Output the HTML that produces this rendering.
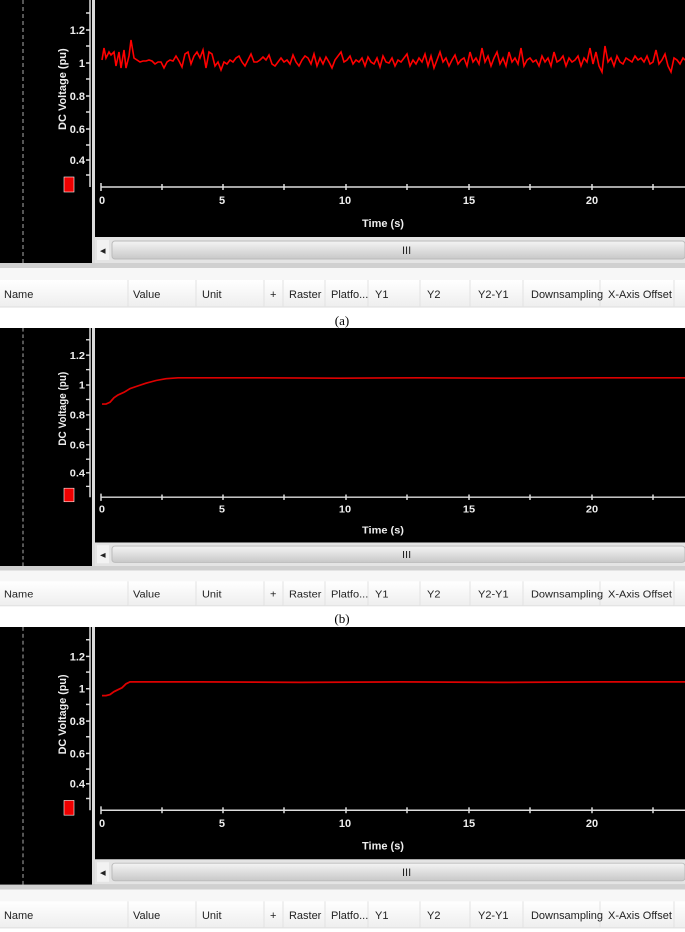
<!DOCTYPE html>
<html><head><meta charset="utf-8"><style>
html,body{margin:0;padding:0;background:#fff;width:685px;height:932px;overflow:hidden}
svg{display:block}
.t{font-family:"Liberation Sans Narrow","Liberation Sans",sans-serif;font-size:11px;fill:#222}
.w{font-family:"Liberation Sans",sans-serif;font-size:11px;font-weight:bold;fill:#eee}
.cap{font-family:"Liberation Serif",serif;font-size:13px;fill:#000}
</style></head><body>
<svg width="685" height="932" viewBox="0 0 685 932" xmlns="http://www.w3.org/2000/svg">
<defs>
<linearGradient id="tr" x1="0" y1="0" x2="0" y2="1"><stop offset="0" stop-color="#f4f4f4"/><stop offset="1" stop-color="#c8c8c8"/></linearGradient>
<linearGradient id="hd" x1="0" y1="0" x2="0" y2="1"><stop offset="0" stop-color="#ffffff"/><stop offset="1" stop-color="#eeeeee"/></linearGradient>
<g id="panel">
<rect x="0" y="0" width="685" height="263" fill="#000"/>
<line x1="23" y1="0" x2="23" y2="263" stroke="#aaa" stroke-width="1" stroke-dasharray="4,3"/>
<rect x="92" y="0" width="3" height="263" fill="#ddd"/>
<rect x="95" y="237" width="590" height="26" fill="#e4e4e4"/>
<rect x="97" y="240" width="12" height="20" fill="#f2f2f2"/>
<text x="100" y="254" class="t" font-size="9">◂</text>
<rect x="112" y="241" width="573" height="18" rx="3" fill="url(#tr)" stroke="#bbb"/>
<text x="402" y="254" class="t" font-size="8" fill="#666">III</text>
<rect x="0" y="263" width="685" height="5" fill="#d0d0d0"/>
<rect x="0" y="268" width="685" height="12" fill="#f7f7f7"/>
<rect x="0" y="280" width="685" height="27" fill="url(#hd)"/>
<line x1="0" y1="307" x2="685" y2="307" stroke="#ddd"/>
<g stroke="#e2e2e2">
<line x1="128" y1="280" x2="128" y2="307"/><line x1="196" y1="280" x2="196" y2="307"/><line x1="264" y1="280" x2="264" y2="307"/><line x1="283" y1="280" x2="283" y2="307"/><line x1="325" y1="280" x2="325" y2="307"/><line x1="368" y1="280" x2="368" y2="307"/><line x1="420" y1="280" x2="420" y2="307"/><line x1="470" y1="280" x2="470" y2="307"/><line x1="523" y1="280" x2="523" y2="307"/><line x1="600" y1="280" x2="600" y2="307"/><line x1="674" y1="280" x2="674" y2="307"/>
</g>
<text class="t" y="298"><tspan x="4">Name</tspan><tspan x="133">Value</tspan><tspan x="202">Unit</tspan><tspan x="270">+</tspan><tspan x="289">Raster</tspan><tspan x="331">Platfo...</tspan><tspan x="375">Y1</tspan><tspan x="427">Y2</tspan><tspan x="478">Y2-Y1</tspan><tspan x="531">Downsampling</tspan><tspan x="608">X-Axis Offset</tspan></text>
<!-- y axis -->
<line x1="90" y1="0" x2="90" y2="187" stroke="#ddd" stroke-width="1.5"/>
<g stroke="#ddd" stroke-width="1.5">
<line x1="86" y1="13" x2="90" y2="13"/><line x1="86" y1="30" x2="90" y2="30"/><line x1="86" y1="46" x2="90" y2="46"/><line x1="86" y1="63" x2="90" y2="63"/><line x1="86" y1="79" x2="90" y2="79"/><line x1="86" y1="96" x2="90" y2="96"/><line x1="86" y1="112" x2="90" y2="112"/><line x1="86" y1="129" x2="90" y2="129"/><line x1="86" y1="145" x2="90" y2="145"/><line x1="86" y1="160" x2="90" y2="160"/><line x1="86" y1="175" x2="90" y2="175"/>
</g>
<text class="w" text-anchor="end"><tspan x="85" y="34">1.2</tspan><tspan x="85" y="67">1</tspan><tspan x="85" y="100">0.8</tspan><tspan x="85" y="133">0.6</tspan><tspan x="85" y="164">0.4</tspan></text>
<text class="w" font-size="9" transform="translate(66,130) rotate(-90)">DC Voltage (pu)</text>
<rect x="64" y="177" width="10" height="15" fill="#e00" stroke="#fff" stroke-width="0.6"/>
<!-- x axis -->
<line x1="101" y1="187" x2="685" y2="187" stroke="#ddd" stroke-width="1.5"/>
<g stroke="#ddd" stroke-width="1.5">
<line x1="101" y1="183" x2="101" y2="191"/><line x1="162" y1="184" x2="162" y2="190"/><line x1="223" y1="184" x2="223" y2="190"/><line x1="284" y1="184" x2="284" y2="190"/><line x1="346" y1="184" x2="346" y2="190"/><line x1="407" y1="184" x2="407" y2="190"/><line x1="469" y1="184" x2="469" y2="190"/><line x1="530" y1="184" x2="530" y2="190"/><line x1="592" y1="184" x2="592" y2="190"/><line x1="653" y1="184" x2="653" y2="190"/>
</g>
<text class="w" text-anchor="middle" y="204"><tspan x="102">0</tspan><tspan x="222">5</tspan><tspan x="345">10</tspan><tspan x="469">15</tspan><tspan x="592">20</tspan></text>
<text class="w" font-size="10" x="383" y="227" text-anchor="middle">Time (s)</text>
</g>
</defs>

<!-- panel a -->
<use href="#panel"/>
<polyline fill="none" stroke="#f00" stroke-width="1.6" points="102,60 104,48 106,58 109,52 111,55 114,52 116,66 119,52 121,68 124,50 126,68 129,56 131,40 134,58 137,60 140,62 143,61 146,61 149,60 152,61 155,64 158,62 161,62 164,68 167,62 170,60 173,61 176,56 179,61 182,67 185,54 188,52 191,64 194,56 197,52 200,58 203,50 206,68 209,52 212,54 215,66 218,62 221,70 224,62 227,64 230,60 233,62 236,58 239,56 242,62 245,66 248,60 251,54 254,62 257,62 260,60 263,57 266,60 269,55 272,64 275,66 278,62 281,58 284,62 287,60 290,64 293,55 296,62 299,66 302,60 305,56 308,58 311,64 314,54 317,66 320,58 323,64 326,57 329,62 332,68 335,60 338,56 341,52 344,62 347,60 350,56 353,64 356,60 359,62 362,58 365,66 368,57 371,62 374,64 377,58 380,67 383,56 386,62 389,63 392,58 395,66 398,60 401,62 404,58 407,54 410,66 413,60 416,64 419,58 422,62 425,54 428,66 431,56 434,68 437,60 440,52 443,62 446,58 449,66 452,60 455,55 458,64 461,60 464,58 467,66 470,52 473,62 476,58 479,64 482,48 485,62 488,56 491,66 494,58 497,52 500,64 503,58 506,66 509,52 512,62 515,58 518,64 521,48 524,66 527,60 530,58 533,62 536,60 539,66 542,56 545,62 548,58 551,66 554,52 557,62 560,60 563,56 566,66 569,58 572,62 575,60 578,56 581,66 584,58 587,62 590,48 593,64 596,52 599,66 602,72 605,46 608,62 611,58 614,66 617,56 620,62 623,64 626,58 629,60 632,62 635,56 638,60 641,58 644,62 647,56 650,64 653,62 656,50 659,64 662,60 665,54 668,66 671,72 674,58 677,60 680,64 683,58 685,60"/>
<text class="cap" x="342" y="325" text-anchor="middle">(a)</text>

<!-- panel b -->
<g transform="translate(0,328) scale(1,0.905)">
<use href="#panel"/>
<polyline fill="none" stroke="#d00" stroke-width="1.8" points="102,84 106,84 110,82 114,77 118,74 124,71 130,67 138,64 146,61 156,58 166,56 178,55 187,55 260,55 340,55.5 420,55 500,55.5 600,55 685,55"/>
</g>
<text class="cap" x="342" y="623" text-anchor="middle">(b)</text>

<!-- panel c -->
<g transform="translate(0,627) scale(1,0.98)">
<use href="#panel"/>
<polyline fill="none" stroke="#d00" stroke-width="1.8" points="102,70 106,70 110,69 114,66 118,64 122,62 126,58 130,56 140,56 200,56 300,56.5 400,56 500,56.5 600,56 685,56"/>
</g>
</svg>
</body></html>
